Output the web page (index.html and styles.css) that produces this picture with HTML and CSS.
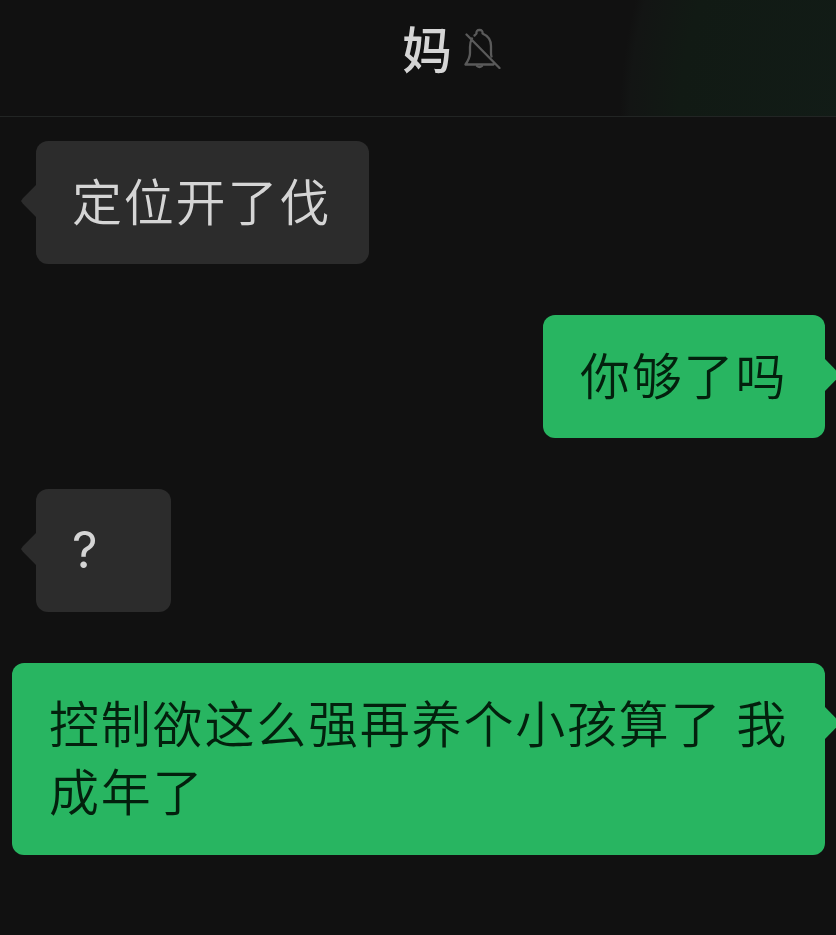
FILE: index.html
```html
<!DOCTYPE html>
<html lang="zh-CN">
<head>
<meta charset="utf-8">
<title>妈</title>
<link rel="stylesheet" href="styles.css">
</head>
<body>
<header class="header">
  <h1 class="title">妈</h1>
  <svg class="bell" viewBox="1.500 0 40 44" fill="none" stroke="#5a5a5a" stroke-width="2.300" stroke-linejoin="round" stroke-linecap="round">
    <path d="M11.500 13.500Q9.500 17 9.500 22V28Q9.500 33 5 39.500H33M14 10.500Q15.500 9.300 16 8.500Q15.500 5 19 5T22 8.500Q30.500 12 30.500 21V28Q30.500 30 31 31.500M6 9.500L39 43"/>
    <path d="M16.500 41Q19 43.200 21.500 41"/>
  </svg>
</header>
<main class="chat">
  <div class="bubble in">定位开了伐</div>
  <div class="bubble out">你够了吗</div>
  <div class="bubble in short">?</div>
  <div class="bubble out long">控制欲这么强再养个小孩算了 我<br>成年了</div>
</main>
</body>
</html>
```
FILE: styles.css
```css
* { box-sizing: border-box; }
body {
  margin: 0;
  height: 935px;
  overflow: hidden;
  background: #111;
  color: #d5d5d5;
  font-family: "Noto Sans CJK SC", sans-serif;
}
.header {
  height: 117px;
  padding: 0 0 22px 68px;
  display: flex;
  align-items: center;
  justify-content: center;
  gap: 10px;
  border-bottom: 1px solid #222524;
  background: radial-gradient(ellipse 240px 340px at 860px 120px, #121c17 0, #111a14 75%, #131514 96%, #111 100%);
}
.title { margin: 0; font-size: 50px; line-height: 68px; font-weight: 500; }
.bell { width: 40px; height: 44px; }
.chat {
  display: flex;
  flex-direction: column;
  gap: 51px;
  padding: 24px 11px 0 12px;
}
.bubble {
  position: relative;
  height: 123px;
  padding: 24px 37px 0 36px;
  border-radius: 12px;
  font-size: 50px;
  line-height: 68px;
  letter-spacing: 1.8px;
  white-space: nowrap;
  font-weight: 350;
}
.in { align-self: flex-start; margin-left: 24px; width: 333px; background: #2c2c2c; }
.out { align-self: flex-end; width: 282px; padding-left: 37px; background: #28b561; color: #03200d; }
.short { width: 135px; padding-top: 27px; font-family: Inter, sans-serif; font-weight: 400; }
.long { width: 813px; height: 192px; word-spacing: 1px; }
.bubble::after {
  content: "";
  position: absolute;
  top: 43px;
  width: 16px;
  height: 34px;
  background: inherit;
}
.in::after { left: -15px; clip-path: polygon(100% 0, 12% 42%, 0 50%, 12% 58%, 100% 100%); }
.out::after { right: -15px; clip-path: polygon(0 0, 88% 42%, 100% 50%, 88% 58%, 0 100%); }
```
